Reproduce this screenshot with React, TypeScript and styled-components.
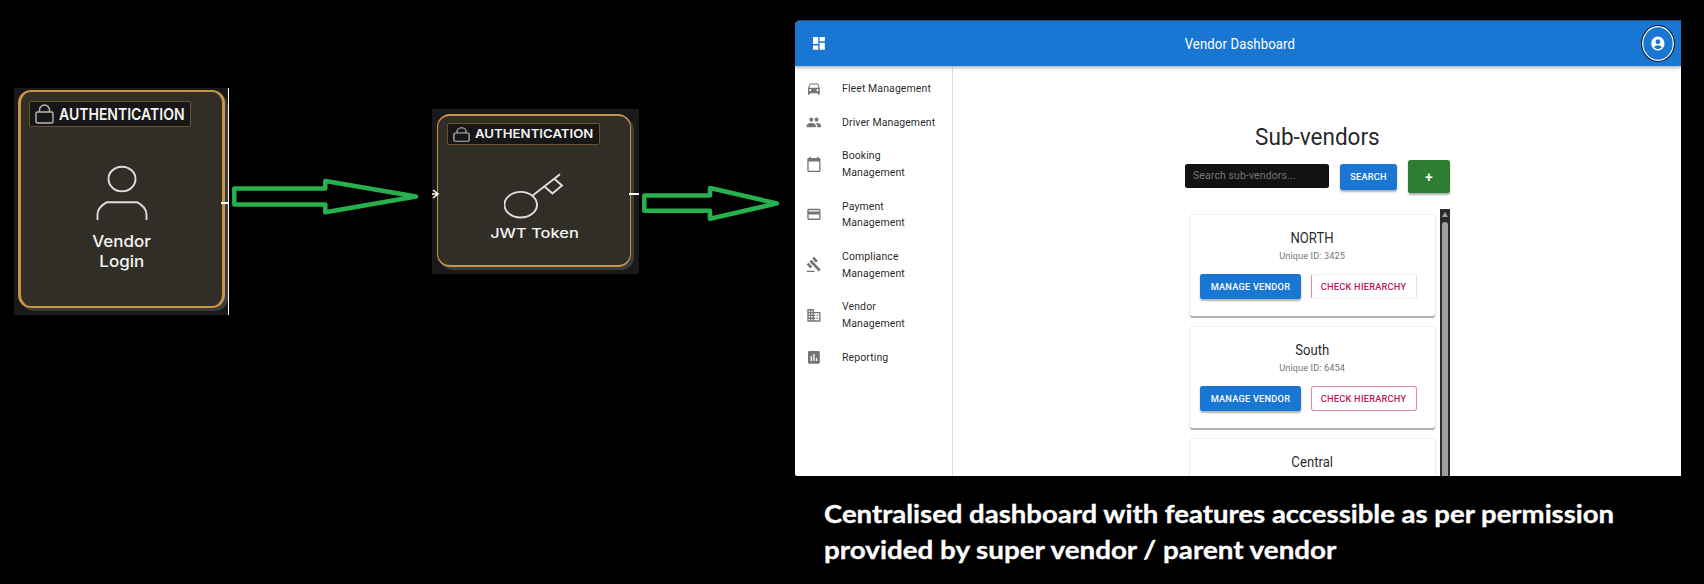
import React from "react";
import styled, { createGlobalStyle } from "styled-components";
import {
  MdAccountCircle,
  MdAssessment,
  MdBusiness,
  MdCalendarToday,
  MdDashboard,
  MdDirectionsCar,
  MdGavel,
  MdPayment,
  MdPeople,
} from "react-icons/md";

const GlobalStyle = createGlobalStyle`
  *, *::before, *::after { box-sizing: border-box; }
  body { margin: 0; background: #000; overflow: hidden; }
`;

const roboto = `Roboto, "Liberation Sans", sans-serif`;

const Stage = styled.main`
  display: flex;
  align-items: flex-start;
  width: 1704px;
  height: 584px;
  background: #000;
  font-family: ${roboto};
`;

/* Text whose glyphs are narrowed or widened without changing their height. */
const Stretch = styled.span<{ $x: number; $origin?: string }>`
  display: inline-block;
  white-space: nowrap;
  transform: scaleX(${(p) => p.$x});
  transform-origin: ${(p) => p.$origin ?? "left"} center;
`;

/* ---------- flow nodes ---------- */

const NodeFrame = styled.section<{ $w: number; $h: number; $top: number; $left: number; $pad: string; $edge?: boolean }>`
  position: relative;
  flex: none;
  width: ${(p) => p.$w}px;
  height: ${(p) => p.$h}px;
  margin: ${(p) => p.$top}px 0 0 ${(p) => p.$left}px;
  padding: ${(p) => p.$pad};
  background: #191919;
  border-right: ${(p) => (p.$edge ? "1px solid #fff" : "0")};
`;

const NodeCard = styled.div<{ $line: number; $pad: string }>`
  display: flex;
  flex-direction: column;
  align-items: center;
  height: 100%;
  padding: ${(p) => p.$pad};
  border: solid #c9944a;
  border-width: 2px ${(p) => p.$line}px;
  border-radius: 13px;
  background: #312e27;
  box-shadow: 3px 3px 0 #3b3b3b;
  color: #f4f4f2;
`;

const Tag = styled.div<{ $w: number; $h: number; $size: number }>`
  display: flex;
  align-items: center;
  align-self: flex-start;
  flex: none;
  width: ${(p) => p.$w}px;
  height: ${(p) => p.$h}px;
  padding-left: 5px;
  border: 1px solid #6e5229;
  border-radius: 2px;
  background: #171717;
  font: 600 ${(p) => p.$size}px/1 Inter, "Liberation Sans", sans-serif;
`;

const LockIcon = styled.svg`
  flex: none;
  margin-right: 5px;
  fill: none;
  stroke: #b9b9b7;
  stroke-width: 1.4;
`;

const NodeLabel = styled.div<{ $size: number; $line: number; $top: number }>`
  margin-top: ${(p) => p.$top}px;
  font: 500 ${(p) => p.$size}px/${(p) => p.$line}px Inter, "Liberation Sans", sans-serif;
  text-align: center;
`;

const Glyph = styled.svg<{ $top: number }>`
  flex: none;
  margin-top: ${(p) => p.$top}px;
  fill: none;
  stroke: #dededb;
  stroke-width: 1.9;
`;

const Port = styled.i<{ $y: number; $w: number; $right: number }>`
  position: absolute;
  top: ${(p) => p.$y}px;
  right: ${(p) => p.$right}px;
  width: ${(p) => p.$w}px;
  height: 2px;
  background: #fff;
`;

const InPort = styled.svg`
  position: absolute;
  left: 0;
  top: 80px;
  fill: none;
  stroke: #fff;
  stroke-width: 1.6;
`;

const Arrow = styled.svg<{ $top: number; $left: number }>`
  flex: none;
  margin: ${(p) => p.$top}px 0 0 ${(p) => p.$left}px;
  fill: none;
  stroke: #27b04e;
  stroke-width: 4.5;
  stroke-linejoin: round;
`;

/* ---------- dashboard ---------- */

const Right = styled.div<{ $left: number }>`
  flex: none;
  width: 886px;
  margin: 20px 0 0 ${(p) => p.$left}px;
`;

const Dashboard = styled.div`
  display: flex;
  flex-direction: column;
  height: 456px;
  border-top: 1px solid #2d4c6e;
  border-radius: 5px 0 0 2px;
  background: #fff;
  color: rgba(0, 0, 0, 0.87);
  overflow: hidden;
`;

const AppBar = styled.header`
  position: relative;
  z-index: 1;
  display: flex;
  align-items: center;
  justify-content: space-between;
  flex: none;
  height: 45px;
  padding: 0 6px 0 16px;
  background: #1976d2;
  color: #fff;
  font-size: 14px;
  letter-spacing: 0.0095em;
  box-shadow: 0 1.4px 3px rgba(0, 0, 0, 0.3), 0 3px 4px rgba(0, 0, 0, 0.12);
  svg { width: 15.8px; height: 16.8px; }
`;

const MenuButton = styled.span`
  display: flex;
  width: 27px;
`;

const AvatarButton = styled.button`
  display: flex;
  align-items: center;
  justify-content: center;
  width: 34px;
  height: 37px;
  padding: 0;
  border: 1px solid #101820;
  border-radius: 50%;
  background: transparent;
  box-shadow: inset 0 0 0 1.3px #fff;
  color: #fff;
`;

const Body = styled.div`
  display: flex;
  flex: 1;
  min-height: 0;
`;

const Sidebar = styled.nav`
  flex: none;
  width: 158px;
  padding-top: 5.6px;
  border-right: 1px solid #dedede;
`;

const NavItem = styled.a<{ $lines: number }>`
  display: flex;
  align-items: center;
  height: ${(p) => 16.8 + 16.8 * p.$lines}px;
  padding-left: 10.5px;
  font-size: 11.2px;
  line-height: 16.8px;
  letter-spacing: 0.00938em;
  svg {
    flex: none;
    width: 15.8px;
    height: 16.8px;
    margin-right: 21px;
    color: #757575;
  }
`;

const NavText = styled.div`
  padding-top: 2px;
`;

const Content = styled.div`
  display: flex;
  flex-direction: column;
  width: 265px;
  margin-left: 232px;
  padding-top: 56px;
`;

const Heading = styled.h1`
  margin: 0;
  font-size: 24px;
  font-weight: 400;
  line-height: 30px;
  text-align: center;
`;

const SearchRow = styled.div`
  display: flex;
  align-items: center;
  justify-content: space-between;
  height: 33px;
  margin-top: 8px;
`;

const SearchBox = styled.div`
  width: 144px;
  height: 24px;
  margin-bottom: 1px;
  padding-left: 8px;
  border-radius: 2.5px;
  background: #121212;
  color: #757575;
  font-size: 11.2px;
  letter-spacing: 0.01em;
  line-height: 24px;
`;

const Button = styled.button<{ $w: number; $h?: number; $kind?: "primary" | "success" | "outlined"; $faint?: boolean }>`
  display: flex;
  align-items: center;
  justify-content: center;
  flex: none;
  width: ${(p) => p.$w}px;
  height: ${(p) => p.$h ?? 25}px;
  padding: 0;
  border: ${(p) => (p.$kind === "outlined" ? "1px solid rgba(194, 24, 91, 0.5)" : "0")};
  ${(p) => p.$faint && "border-color: rgba(194, 24, 91, 0.06) rgba(194, 24, 91, 0.15) rgba(194, 24, 91, 0.06) rgba(194, 24, 91, 0.5);"}
  border-radius: 2.8px;
  background: ${(p) => (p.$kind === "outlined" ? "#fff" : p.$kind === "success" ? "#2e7d32" : "#1976d2")};
  color: ${(p) => (p.$kind === "outlined" ? "#c2185b" : "#fff")};
  box-shadow: ${(p) => (p.$kind === "outlined" ? "none" : "0 1.5px 2px rgba(0, 0, 0, 0.3)")};
  font: ${(p) => (p.$kind === "success" ? "500 14px" : "500 9.8px")}/1 ${roboto};
  letter-spacing: 0.027em;
`;

const ListArea = styled.div`
  display: flex;
  justify-content: space-between;
  height: 267px;
  margin-top: 16px;
  overflow: hidden;
`;

const Cards = styled.div`
  display: flex;
  flex-direction: column;
  gap: 11px;
  width: 245px;
  margin-left: 5px;
  padding-top: 6px;
`;

const Card = styled.article`
  display: flex;
  flex-direction: column;
  align-items: center;
  flex: none;
  height: 101px;
  padding: 13px 10px 0;
  border-radius: 2.8px;
  background: #fff;
  box-shadow: 0 1.2px 1px rgba(0, 0, 0, 0.3), 0 0 2px rgba(0, 0, 0, 0.18);
`;

const CardTitle = styled.h2`
  margin: 0;
  font-size: 14px;
  font-weight: 400;
  line-height: 20px;
`;

const CardMeta = styled.p`
  margin: 1px 0 0;
  color: rgba(0, 0, 0, 0.6);
  font-size: 9.8px;
  line-height: 14px;
  letter-spacing: 0.01071em;
`;

const CardActions = styled.div`
  display: flex;
  align-self: stretch;
  gap: 10px;
  margin-top: 11px;
`;

const Scrollbar = styled.div`
  display: flex;
  flex-direction: column;
  align-items: center;
  width: 10px;
  background: #2c2c2c;
  svg { flex: none; margin: 3px 0 5px; }
`;

const Thumb = styled.div`
  width: 6px;
  flex: 1;
  border-radius: 3px 3px 0 0;
  background: #9f9f9f;
`;

const Caption = styled.div`
  margin: 20px 0 0 29px;
  color: #fff;
  font: 700 25.5px/35.7px Lato, "Open Sans", sans-serif;
  -webkit-text-stroke: 0.35px #fff;
`;

const Line = styled.div``;

const K = 0.938;

const navItems = [
  { icon: MdDirectionsCar, lines: ["Fleet Management"] },
  { icon: MdPeople, lines: ["Driver Management"] },
  { icon: MdCalendarToday, lines: ["Booking", "Management"] },
  { icon: MdPayment, lines: ["Payment", "Management"] },
  { icon: MdGavel, lines: ["Compliance", "Management"] },
  { icon: MdBusiness, lines: ["Vendor", "Management"] },
  { icon: MdAssessment, lines: ["Reporting"] },
];

const vendors: { name: string; id?: string; faint?: boolean }[] = [
  { name: "NORTH", id: "3425", faint: true },
  { name: "South", id: "6454" },
  { name: "Central" },
];

function Lock({ w, h }: { w: number; h: number }) {
  return (
    <LockIcon width={w} height={h} viewBox="0 0 19 20" preserveAspectRatio="none">
      <rect x="1" y="8" width="17" height="11" rx="1.5" />
      <path d="M4.5 8V6a5 5 0 0 1 10 0v2" />
    </LockIcon>
  );
}

export default function App() {
  return (
    <Stage>
      <GlobalStyle />
      <NodeFrame $w={215} $h={227} $top={88} $left={14} $pad="2px 3px 7px 4px" $edge>
        <NodeCard $line={3} $pad="9px 8px 0">
          <Tag $w={162} $h={26} $size={16}>
            <Lock w={19} h={20} />
            <Stretch $x={0.875}>AUTHENTICATION</Stretch>
          </Tag>
          <Glyph $top={38} width="54" height="56" viewBox="0 0 54 56">
            <ellipse cx="27" cy="14" rx="13.5" ry="12.3" />
            <path d="M2.500 55V49Q3 42 12 37.200H42Q51 42 51.500 49V55" />
          </Glyph>
          <NodeLabel $size={16.5} $line={19.5} $top={11}>
            <Line><Stretch $x={1.03} $origin="center">Vendor</Stretch></Line>
            <Line><Stretch $x={1.03} $origin="center">Login</Stretch></Line>
          </NodeLabel>
        </NodeCard>
        <Port $y={114} $w={7} $right={0} />
      </NodeFrame>

      <Arrow $top={176} $left={2} width="191" height="42" viewBox="231 176 191 42">
        <path d="M234.300 188.400H325.300V181L416 196.500L325.300 212.300V204.600H234.300Z" />
      </Arrow>

      <NodeFrame $w={207} $h={165} $top={109} $left={10} $pad="5px 8px 7px 5px">
        <NodeCard $line={1.5} $pad="7px 9px 0">
          <Tag $w={153} $h={22} $size={12}>
            <Lock w={17} h={15} />
            <Stretch $x={1.1}>AUTHENTICATION</Stretch>
          </Tag>
          <Glyph $top={28} width="60" height="46" viewBox="504 173 60 46">
            <ellipse cx="520.700" cy="204.700" rx="16.300" ry="12.800" />
            <path d="M532 196L560 174.300M545 187L552.500 193.500L562 185.500L554 178.500" />
          </Glyph>
          <NodeLabel $size={13.5} $line={18} $top={5}>
            <Stretch $x={1.215} $origin="center">JWT Token</Stretch>
          </NodeLabel>
        </NodeCard>
        <InPort width="7" height="10" viewBox="0 0 7 10">
          <path d="M0 5H6M1 1L6 5L1 9" />
        </InPort>
        <Port $y={84} $w={10} $right={0} />
      </NodeFrame>

      <Arrow $top={183} $left={2} width="142" height="41" viewBox="641 183 142 41">
        <path d="M644.300 195.500H710V188L777 203.400L710 218.800V210.800H644.300Z" />
      </Arrow>

      <Right $left={12}>
        <Dashboard>
          <AppBar>
            <MenuButton><MdDashboard preserveAspectRatio="none" /></MenuButton>
            <Stretch $x={K} $origin="center">Vendor Dashboard</Stretch>
            <AvatarButton>
              <MdAccountCircle preserveAspectRatio="none" />
            </AvatarButton>
          </AppBar>
          <Body>
            <Sidebar>
              {navItems.map(({ icon: Icon, lines }) => (
                <NavItem key={lines[0]} $lines={lines.length}>
                  <Icon preserveAspectRatio="none" />
                  <NavText>
                    {lines.map((line) => (
                      <Line key={line}><Stretch $x={K}>{line}</Stretch></Line>
                    ))}
                  </NavText>
                </NavItem>
              ))}
            </Sidebar>
            <Content>
              <Heading><Stretch $x={K} $origin="center">Sub-vendors</Stretch></Heading>
              <SearchRow>
                <SearchBox><Stretch $x={K}>Search sub-vendors...</Stretch></SearchBox>
                <Button $w={57} $h={26}><Stretch $x={K} $origin="center">SEARCH</Stretch></Button>
                <Button $w={42} $h={33} $kind="success">+</Button>
              </SearchRow>
              <ListArea>
                <Cards>
                  {vendors.map((v) => (
                    <Card key={v.name}>
                      <CardTitle><Stretch $x={K} $origin="center">{v.name}</Stretch></CardTitle>
                      {v.id && (
                        <>
                          <CardMeta><Stretch $x={K} $origin="center">Unique ID: {v.id}</Stretch></CardMeta>
                          <CardActions>
                            <Button $w={101}><Stretch $x={K} $origin="center">MANAGE VENDOR</Stretch></Button>
                            <Button $w={106} $kind="outlined" $faint={v.faint}><Stretch $x={K} $origin="center">CHECK HIERARCHY</Stretch></Button>
                          </CardActions>
                        </>
                      )}
                    </Card>
                  ))}
                </Cards>
                <Scrollbar>
                  <svg width="6" height="5" viewBox="0 0 6 5"><path d="M3 0L6 5H0Z" fill="#9f9f9f" /></svg>
                  <Thumb />
                </Scrollbar>
              </ListArea>
            </Content>
          </Body>
        </Dashboard>
        <Caption>
          <Line><Stretch $x={1.079}>Centralised dashboard with features accessible as per permission</Stretch></Line>
          <Line><Stretch $x={1.089}>provided by super vendor / parent vendor</Stretch></Line>
        </Caption>
      </Right>
    </Stage>
  );
}
